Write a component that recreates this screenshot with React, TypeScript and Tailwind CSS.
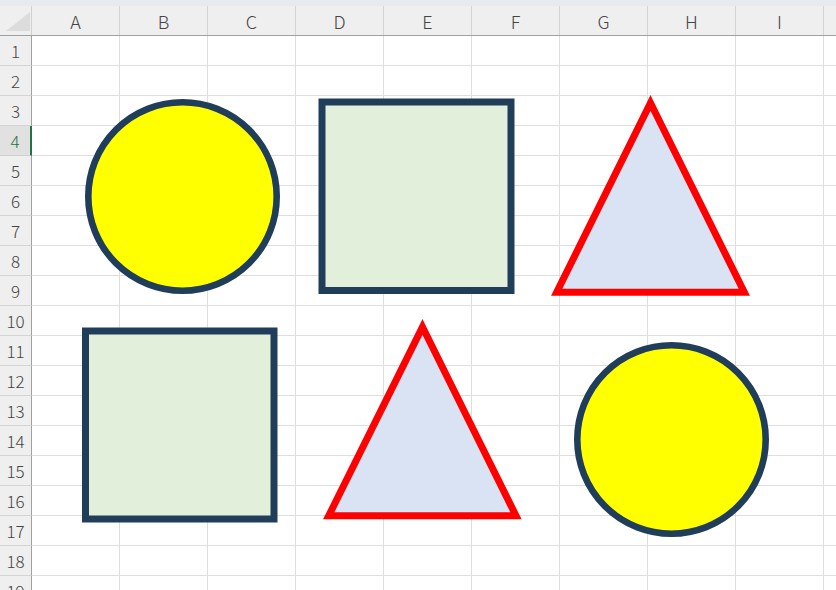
import React from 'react';

const columns = ['A', 'B', 'C', 'D', 'E', 'F', 'G', 'H', 'I', ''];
const rows = Array.from({ length: 19 }, (_, i) => i + 1);
const activeRow = 4;

const font = { fontFamily: '"Noto Sans CJK JP", "Liberation Sans", sans-serif' };

const Shapes: React.FC = () => (
  <svg
    className="absolute inset-0 pointer-events-none"
    width={836}
    height={590}
    viewBox="0 0 836 590"
  >
    {/* top row */}
    <circle cx={182.5} cy={196.5} r={94.2} fill="#ffff00" stroke="#203e5a" strokeWidth={6.6} />
    <rect x={322} y={102} width={189} height={188.5} fill="#e2efda" stroke="#203e5a" strokeWidth={7} />
    <polygon
      points="650.5,103 744.3,292.2 556.7,292.2"
      fill="#dae3f3"
      stroke="#ff0000"
      strokeWidth={7}
      strokeLinejoin="miter"
    />

    {/* bottom row */}
    <rect x={85.5} y={331} width={188.5} height={188} fill="#e2efda" stroke="#203e5a" strokeWidth={7} />
    <polygon
      points="422.5,327 516,515.8 328.7,515.8"
      fill="#dae3f3"
      stroke="#ff0000"
      strokeWidth={7}
      strokeLinejoin="miter"
    />
    <circle cx={671.5} cy={439.5} r={94.2} fill="#ffff00" stroke="#203e5a" strokeWidth={6.6} />
  </svg>
);

export default function App() {
  return (
    <div className="relative w-[836px] h-[590px] overflow-hidden bg-white" style={font}>
      {/* ribbon edge */}
      <div className="h-[6px] bg-[#e8ebee]" />

      {/* column headers */}
      <div className="flex h-[30px] bg-[#efefef] border-b border-[#a0a0a0]">
        <div className="relative w-[32px] shrink-0 border-r border-[#d0d0d0]">
          <div className="absolute left-[6px] bottom-[4px] w-0 h-0 border-l-[24px] border-l-transparent border-b-[19px] border-b-[#dcdcdc]" />
        </div>
        {columns.map((c, i) => (
          <div
            key={i}
            className="w-[88px] shrink-0 flex items-center justify-center border-r border-[#d4d4d4] text-[18px] leading-none font-light text-[#444444]"
          >
            {c}
          </div>
        ))}
      </div>

      {/* grid */}
      <div className="flex flex-col">
        {rows.map((r) => (
          <div key={r} className="flex h-[30px] shrink-0">
            <div
              className={
                r === activeRow
                  ? 'w-[32px] shrink-0 flex items-center justify-center bg-[#e1e1e1] border-b border-[#cfcfcf] border-r-2 border-r-[#217346] text-[17px] leading-none font-light text-[#217346]'
                  : 'w-[32px] shrink-0 flex items-center justify-center bg-[#efefef] border-b border-[#d4d4d4] border-r border-r-[#a0a0a0] text-[17px] leading-none font-light text-[#444444]'
              }
            >
              {r}
            </div>
            {columns.map((_, i) => (
              <div key={i} className="w-[88px] shrink-0 border-r border-b border-[#dedede]" />
            ))}
          </div>
        ))}
      </div>

      <Shapes />
    </div>
  );
}
